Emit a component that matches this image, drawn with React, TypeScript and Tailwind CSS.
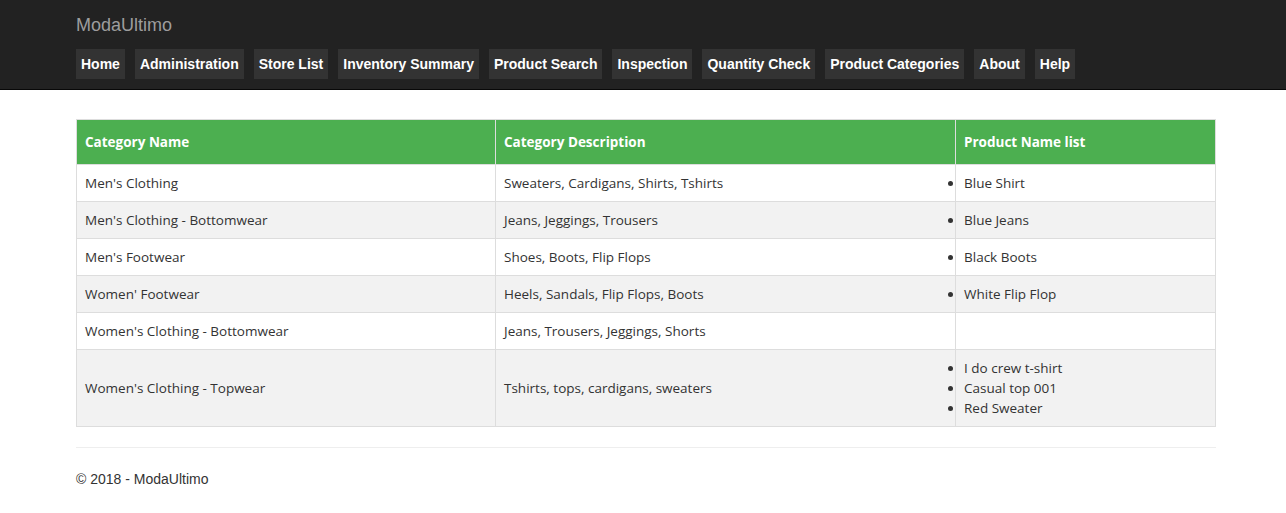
import React from "react";

const nav = [
  "Home",
  "Administration",
  "Store List",
  "Inventory Summary",
  "Product Search",
  "Inspection",
  "Quantity Check",
  "Product Categories",
  "About",
  "Help",
];

const rows: { name: string; desc: string; products: string[] }[] = [
  { name: "Men's Clothing", desc: "Sweaters, Cardigans, Shirts, Tshirts", products: ["Blue Shirt"] },
  { name: "Men's Clothing - Bottomwear", desc: "Jeans, Jeggings, Trousers", products: ["Blue Jeans"] },
  { name: "Men's Footwear", desc: "Shoes, Boots, Flip Flops", products: ["Black Boots"] },
  { name: "Women' Footwear", desc: "Heels, Sandals, Flip Flops, Boots", products: ["White Flip Flop"] },
  { name: "Women's Clothing - Bottomwear", desc: "Jeans, Trousers, Jeggings, Shorts", products: [] },
  {
    name: "Women's Clothing - Topwear",
    desc: "Tshirts, tops, cardigans, sweaters",
    products: ["I do crew t-shirt", "Casual top 001", "Red Sweater"],
  },
];

export default function App() {
  return (
    <div className="min-h-[513px] bg-white font-['Liberation_Sans',Arial,sans-serif] text-[14px] text-[#333]">
      <header className="h-[90px] bg-[#222] border-b border-[#080808]">
        <div className="w-[1140px] ml-[76px]">
          <div className="h-[49px] flex items-center text-[18px] text-[#9d9d9d] pt-[1px]">ModaUltimo</div>
          <nav className="flex gap-[10px]">
            {nav.map((n) => (
              <a
                key={n}
                className="block bg-[#333] text-white font-bold px-[5px] py-[5px] leading-[20px]"
              >
                {n}
              </a>
            ))}
          </nav>
        </div>
      </header>
      <main className="w-[1140px] ml-[76px] pt-[29px]">
        <table className="w-full border-collapse font-['Open_Sans','Noto_Sans',sans-serif] text-[13.5px] text-[#333]">
          <thead>
            <tr className="bg-[#4caf50] text-white">
              <th className="w-[419px] text-left font-bold border border-[#ddd] px-[8px] py-[12px] leading-[20px]">Category Name</th>
              <th className="w-[460px] text-left font-bold border border-[#ddd] px-[8px] py-[12px] leading-[20px]">Category Description</th>
              <th className="text-left font-bold border border-[#ddd] px-[8px] py-[12px] leading-[20px]">Product Name list</th>
            </tr>
          </thead>
          <tbody>
            {rows.map((r, i) => (
              <tr key={r.name} className={i % 2 === 1 ? "bg-[#f2f2f2]" : "bg-white"}>
                <td className="border border-[#ddd] px-[8px] py-[8px] leading-[20px]">{r.name}</td>
                <td className="border border-[#ddd] px-[8px] py-[8px] leading-[20px]">{r.desc}</td>
                <td className="border border-[#ddd] px-[8px] py-[8px] leading-[20px]">
                  {r.products.length > 0 && (
                    <ul className="list-disc list-outside m-0 p-0">
                      {r.products.map((p) => (
                        <li key={p}>{p}</li>
                      ))}
                    </ul>
                  )}
                </td>
              </tr>
            ))}
          </tbody>
        </table>
        <hr className="mt-[20px] border-0 border-t border-[#eee]" />
        <footer className="pt-[21px] leading-[20px]">© 2018 - ModaUltimo</footer>
      </main>
    </div>
  );
}
